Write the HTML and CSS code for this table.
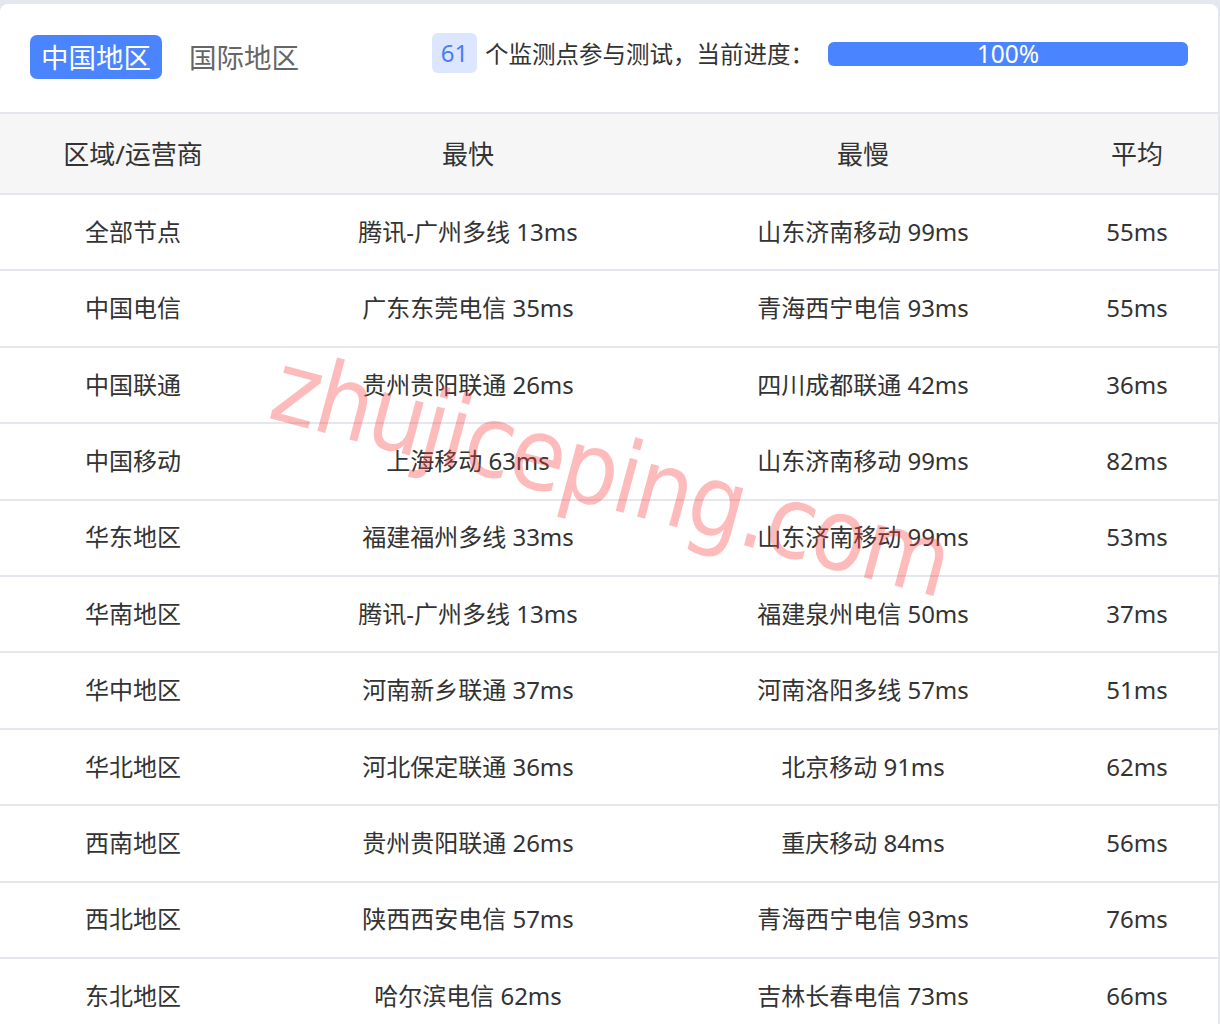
FILE: index.html
```html
<!DOCTYPE html>
<html lang="zh-CN">
<head>
<meta charset="utf-8">
<link rel="stylesheet" href="styles.css">
</head>
<body>
<div class="card">
  <div class="topbar">
    <div class="tabs">
      <span class="tab active">中国地区</span>
      <span class="tab">国际地区</span>
    </div>
    <div class="status">
      <span class="badge">61</span>
      <span class="status-text">个监测点参与测试，当前进度：</span>
      <div class="progress"><div class="progress-fill" style="width:100%">100%</div></div>
    </div>
  </div>
  <div class="table-wrap">
    <div class="row head">
      <div class="c1">区域/运营商</div><div class="c2">最快</div><div class="c3">最慢</div><div class="c4">平均</div>
    </div>
    <div class="row"><div class="c1">全部节点</div><div class="c2">腾讯-广州多线 13ms</div><div class="c3">山东济南移动 99ms</div><div class="c4">55ms</div></div>
    <div class="row"><div class="c1">中国电信</div><div class="c2">广东东莞电信 35ms</div><div class="c3">青海西宁电信 93ms</div><div class="c4">55ms</div></div>
    <div class="row"><div class="c1">中国联通</div><div class="c2">贵州贵阳联通 26ms</div><div class="c3">四川成都联通 42ms</div><div class="c4">36ms</div></div>
    <div class="row"><div class="c1">中国移动</div><div class="c2">上海移动 63ms</div><div class="c3">山东济南移动 99ms</div><div class="c4">82ms</div></div>
    <div class="row"><div class="c1">华东地区</div><div class="c2">福建福州多线 33ms</div><div class="c3">山东济南移动 99ms</div><div class="c4">53ms</div></div>
    <div class="row"><div class="c1">华南地区</div><div class="c2">腾讯-广州多线 13ms</div><div class="c3">福建泉州电信 50ms</div><div class="c4">37ms</div></div>
    <div class="row"><div class="c1">华中地区</div><div class="c2">河南新乡联通 37ms</div><div class="c3">河南洛阳多线 57ms</div><div class="c4">51ms</div></div>
    <div class="row"><div class="c1">华北地区</div><div class="c2">河北保定联通 36ms</div><div class="c3">北京移动 91ms</div><div class="c4">62ms</div></div>
    <div class="row"><div class="c1">西南地区</div><div class="c2">贵州贵阳联通 26ms</div><div class="c3">重庆移动 84ms</div><div class="c4">56ms</div></div>
    <div class="row"><div class="c1">西北地区</div><div class="c2">陕西西安电信 57ms</div><div class="c3">青海西宁电信 93ms</div><div class="c4">76ms</div></div>
    <div class="row"><div class="c1">东北地区</div><div class="c2">哈尔滨电信 62ms</div><div class="c3">吉林长春电信 73ms</div><div class="c4">66ms</div></div>
    <div class="watermark">zhujiceping.com</div>
  </div>
</div>
</body>
</html>
```
FILE: styles.css
```css
html, body {
  margin: 0;
  padding: 0;
}
body {
  background: #e4e8ee;
  font-family: "Noto Sans", "Noto Sans CJK SC", sans-serif;
  color: #333;
  overflow: hidden;
}
.card {
  margin: 4px 2px 0 0;
  background: #fff;
  border-radius: 8px 8px 0 0;
  height: 1100px;
}
.topbar {
  height: 110px;
  display: flex;
  align-items: center;
  justify-content: space-between;
  padding: 0 30px 0 30px;
  border-bottom: 2px solid #e4e8ee;
  box-sizing: border-box;
}
.tabs {
  display: flex;
  align-items: center;
  gap: 16px;
  margin-top: -2px;
}
.tab {
  font-family: "Noto Sans CJK SC", sans-serif;
  font-size: 27.5px;
  line-height: 42px;
  height: 44px;
  padding: 0 11px;
  color: #666;
  border-radius: 7px;
}
.tab.active {
  background: #4a84ff;
  color: #fff;
}
.status {
  display: flex;
  align-items: center;
  margin-top: -10px;
}
.badge {
  width: 45px;
  height: 40px;
  line-height: 40px;
  text-align: center;
  background: #dce6ff;
  color: #4a7cf6;
  border-radius: 6px;
  font-size: 24px;
}
.status-text {
  font-family: "Noto Sans CJK SC", sans-serif;
  font-size: 23.5px;
  margin-left: 8px;
  color: #333;
}
.progress {
  width: 360px;
  height: 24px;
  margin-left: 14px;
  margin-top: 2px;
  background: #e9eefb;
  border-radius: 6px;
}
.progress-fill {
  height: 24px;
  background: #4a84ff;
  color: #fff;
  text-align: center;
  font-size: 24.5px;
  line-height: 24px;
  border-radius: 6px;
}
.table-wrap {
  position: relative;
  overflow: hidden;
}
.row {
  display: grid;
  grid-template-columns: 266px 404px 386px 1fr;
  height: 76.4px;
  align-items: center;
  border-bottom: 2px solid #e4e8ee;
  box-sizing: border-box;
  font-size: 24px;
  line-height: 1.2;
  text-align: center;
}
.row.head {
  height: 81px;
  background: #f6f6f6;
  font-size: 26px;
  padding-top: 3px;
}
.row > div {
  font-family: "Noto Sans", "Noto Sans CJK SC", sans-serif;
}
.watermark {
  position: absolute;
  left: 288px;
  top: 222px;
  font-family: "DejaVu Sans Condensed", "DejaVu Sans", sans-serif;
  font-stretch: condensed;
  font-size: 100px;
  line-height: 1;
  letter-spacing: -2.5px;
  color: rgba(250, 60, 60, 0.35);
  transform: rotate(15deg);
  transform-origin: left top;
  white-space: nowrap;
  pointer-events: none;
}
```
